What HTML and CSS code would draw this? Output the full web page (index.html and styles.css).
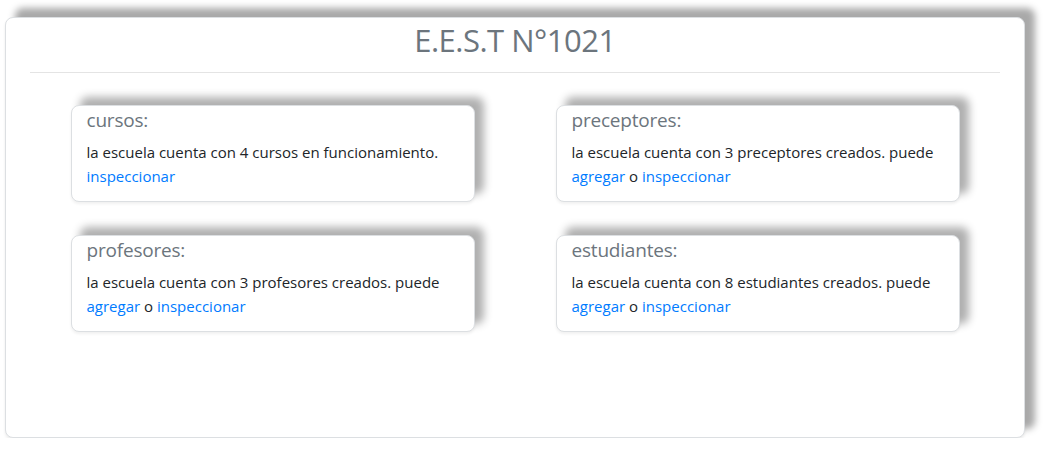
FILE: index.html
```html
<!DOCTYPE html>
<html lang="es">
<head>
<meta charset="utf-8">
<title>E.E.S.T N°1021</title>
<link rel="stylesheet" href="styles.css">
</head>
<body>
<main class="panel">
  <header class="panel-header">
    <h1 class="panel-title">E.E.S.T N°1021</h1>
  </header>
  <hr class="divider">
  <section class="grid">
    <article class="card">
      <h5 class="card-title">cursos:</h5>
      <p class="card-text">la escuela cuenta con 4 cursos en funcionamiento. <a href="#">inspeccionar</a></p>
    </article>
    <article class="card">
      <h5 class="card-title">preceptores:</h5>
      <p class="card-text">la escuela cuenta con 3 preceptores creados. puede <a href="#">agregar</a> o <a href="#">inspeccionar</a></p>
    </article>
    <article class="card">
      <h5 class="card-title">profesores:</h5>
      <p class="card-text">la escuela cuenta con 3 profesores creados. puede <a href="#">agregar</a> o <a href="#">inspeccionar</a></p>
    </article>
    <article class="card">
      <h5 class="card-title">estudiantes:</h5>
      <p class="card-text">la escuela cuenta con 8 estudiantes creados. puede <a href="#">agregar</a> o <a href="#">inspeccionar</a></p>
    </article>
  </section>
</main>
</body>
</html>
```

FILE: styles.css
```css
html, body {
  margin: 0;
  padding: 0;
  background: #ffffff;
}

body {
  font-family: "Open Sans", "Noto Sans", sans-serif;
  font-size: 15px;
  line-height: 1.5;
  color: #212529;
  padding: 17px 20px 0 5px;
}

.panel {
  box-sizing: border-box;
  height: 421px;
  border: 1px solid #dcdfe2;
  border-radius: 8px;
  background: #fff;
  box-shadow: 10px -9px 7px #a9a9a9, 0 2px 3px rgba(0, 0, 0, 0.08);
  padding: 0 24px;
}

.panel-header {
  display: flex;
  justify-content: center;
  padding-top: 2px;
}

.panel-title {
  margin: 0;
  font-size: 31px;
  letter-spacing: -0.5px;
  font-weight: 400;
  line-height: 40px;
  color: #6c757d;
}

.divider {
  margin: 12px 0 0;
  border: 0;
  border-top: 1px solid #e4e4e4;
}

.grid {
  display: grid;
  grid-template-columns: 404px 404px;
  column-gap: 81px;
  row-gap: 33px;
  justify-content: center;
  margin-top: 32px;
}

.card {
  box-sizing: border-box;
  border: 1px solid #dcdfe2;
  border-radius: 8px;
  background: #fff;
  box-shadow: 9px -8px 9px #b0b0b0, 0 2px 3px rgba(0, 0, 0, 0.06);
  padding: 2px 16px 13px 15px;
}

.card-title {
  margin: 0 0 8px;
  font-size: 19px;
  letter-spacing: -0.2px;
  font-weight: 400;
  line-height: 24px;
  color: #6c757d;
}

.card-text {
  margin: 0;
  font-size: 15px;
  line-height: 24px;
}

.card-text a {
  color: #007bff;
  text-decoration: none;
}
```
